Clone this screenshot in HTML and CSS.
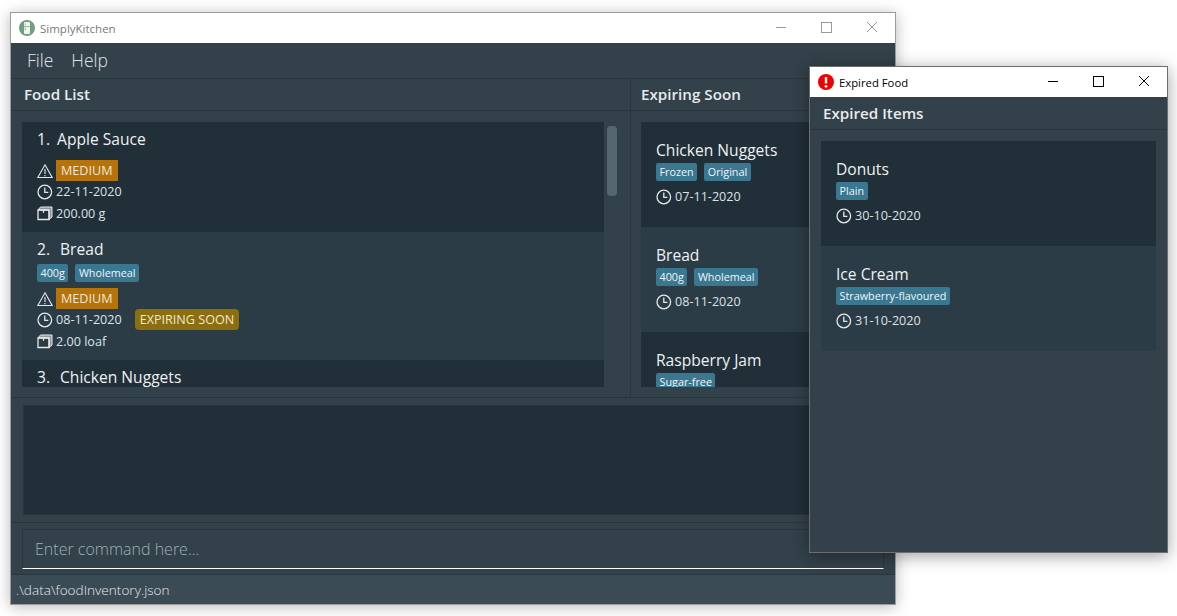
FILE: index.html
```html
<!DOCTYPE html>
<html lang="en">
<head>
    <meta charset="UTF-8">
    <title>SimplyKitchen</title>
    <link rel="stylesheet" href="styles.css">
</head>
<body>
    <svg class="defs" width="0" height="0">
        <symbol id="i-warn" viewBox="0 0 16 16">
            <path d="M8 1.800 15.200 14.500H.8Z" fill="none" stroke="currentColor" stroke-width="1.100"/>
            <path d="M8 6v5M8 12v1.200" stroke="currentColor" stroke-width="1.100"/>
        </symbol>
        <symbol id="i-clock" viewBox="0 0 16 16">
            <circle cx="7.800" cy="8" r="6.800" fill="none" stroke="currentColor" stroke-width="1.300"/>
            <path d="M7.800 3.600V8.400H11.400" fill="none" stroke="currentColor" stroke-width="1.300"/>
        </symbol>
        <symbol id="i-box" viewBox="0 0 16 16">
            <path d="M1 5 3.500 2H15V12L12 14.500V5Z" fill="currentColor" fill-opacity=".55" stroke="currentColor" stroke-width="1"/>
            <path d="M1 5H12V14.500H1Z" fill="none" stroke="currentColor" stroke-width="1.300"/>
            <path d="M6.500 5V7.800" stroke="currentColor" stroke-width="1.300"/>
        </symbol>
    </svg>

    <!-- main window -->
    <div class="window mainWindow">
        <div class="titleBar">
            <svg class="appIcon" viewBox="0 0 16 16" width="16" height="16">
                <circle cx="8" cy="8" r="8" fill="#6f9f80"/>
                <rect x="5" y="2" width="6" height="12" rx="1" fill="#f4f4ee"/>
                <path d="M5 6.500H11M6.300 3.500V5.500M6.300 7.500V10" stroke="#6f9f80" stroke-width=".7"/>
            </svg>
            <span class="titleText">SimplyKitchen</span>
            <div class="winButtons inactive">
                <svg viewBox="0 0 46 30" width="46" height="30"><path d="M19 14.500H29" stroke="currentColor"/></svg>
                <svg viewBox="0 0 46 30" width="46" height="30"><rect x="18.500" y="9.500" width="10" height="10" fill="none" stroke="currentColor"/></svg>
                <svg viewBox="0 0 46 30" width="46" height="30"><path d="M18 9 28 19M28 9 18 19" stroke="currentColor" fill="none"/></svg>
            </div>
        </div>

        <div class="menuBar">
            <span>File</span>
            <span>Help</span>
        </div>

        <div class="panels">
            <div class="panel foodPanel">
                <div class="panelHeader">Food List</div>
                <div class="listWrap">
                    <div class="list">
                        <div class="card dark">
                            <div class="cardTitle"><span class="num first">1.</span>Apple Sauce</div>
                            <div class="tags"></div>
                            <div class="infoRow">
                                <svg class="icon"><use href="#i-warn"/></svg>
                                <span class="priority">MEDIUM</span>
                            </div>
                            <div class="infoRow">
                                <svg class="icon"><use href="#i-clock"/></svg>
                                <span>22-11-2020</span>
                            </div>
                            <div class="infoRow qty">
                                <svg class="icon"><use href="#i-box"/></svg>
                                <span>200.00 g</span>
                            </div>
                        </div>
                        <div class="card light">
                            <div class="cardTitle"><span class="num">2.</span>Bread</div>
                            <div class="tags"><span class="tag">400g</span><span class="tag">Wholemeal</span></div>
                            <div class="infoRow">
                                <svg class="icon"><use href="#i-warn"/></svg>
                                <span class="priority">MEDIUM</span>
                            </div>
                            <div class="infoRow">
                                <svg class="icon"><use href="#i-clock"/></svg>
                                <span>08-11-2020</span>
                                <span class="soon">EXPIRING SOON</span>
                            </div>
                            <div class="infoRow qty">
                                <svg class="icon"><use href="#i-box"/></svg>
                                <span>2.00 loaf</span>
                            </div>
                        </div>
                        <div class="card dark">
                            <div class="cardTitle"><span class="num">3.</span>Chicken Nuggets</div>
                        </div>
                    </div>
                    <div class="scrollTrack"><div class="scrollThumb"></div></div>
                </div>
            </div>

            <div class="panel soonPanel">
                <div class="panelHeader">Expiring Soon</div>
                <div class="listWrap">
                    <div class="list">
                        <div class="card small dark">
                            <div class="cardTitle">Chicken Nuggets</div>
                            <div class="tags"><span class="tag">Frozen</span><span class="tag">Original</span></div>
                            <div class="infoRow">
                                <svg class="icon"><use href="#i-clock"/></svg>
                                <span>07-11-2020</span>
                            </div>
                        </div>
                        <div class="card small light">
                            <div class="cardTitle">Bread</div>
                            <div class="tags"><span class="tag">400g</span><span class="tag">Wholemeal</span></div>
                            <div class="infoRow">
                                <svg class="icon"><use href="#i-clock"/></svg>
                                <span>08-11-2020</span>
                            </div>
                        </div>
                        <div class="card small dark">
                            <div class="cardTitle">Raspberry Jam</div>
                            <div class="tags"><span class="tag">Sugar-free</span></div>
                        </div>
                    </div>
                </div>
            </div>
        </div>

        <div class="resultPane">
            <div class="resultBox"></div>
        </div>

        <div class="commandPane">
            <div class="commandBox">Enter command here...</div>
        </div>

        <div class="statusBar">.\data\foodInventory.json</div>
    </div>

    <!-- expired food popup -->
    <div class="window popupWindow">
        <div class="titleBar popupTitle">
            <svg class="appIcon" viewBox="0 0 16 16" width="16" height="16">
                <circle cx="8" cy="8" r="8" fill="#f00000"/>
                <path d="M8 3V9.500" stroke="#fff" stroke-width="2.400"/>
                <circle cx="8" cy="12.300" r="1.400" fill="#fff"/>
            </svg>
            <span class="titleText">Expired Food</span>
            <div class="winButtons">
                <svg viewBox="0 0 46 30" width="46" height="30"><path d="M19 14.500H29" stroke="currentColor"/></svg>
                <svg viewBox="0 0 46 30" width="46" height="30"><rect x="18.500" y="9.500" width="10" height="10" fill="none" stroke="currentColor"/></svg>
                <svg viewBox="0 0 46 30" width="46" height="30"><path d="M18 9 28 19M28 9 18 19" stroke="currentColor" fill="none"/></svg>
            </div>
        </div>
        <div class="panelHeader popupHeader">Expired Items</div>
        <div class="popupList">
            <div class="card small dark">
                <div class="cardTitle">Donuts</div>
                <div class="tags"><span class="tag">Plain</span></div>
                <div class="infoRow">
                    <svg class="icon"><use href="#i-clock"/></svg>
                    <span>30-10-2020</span>
                </div>
            </div>
            <div class="card small light">
                <div class="cardTitle">Ice Cream</div>
                <div class="tags"><span class="tag">Strawberry-flavoured</span></div>
                <div class="infoRow">
                    <svg class="icon"><use href="#i-clock"/></svg>
                    <span>31-10-2020</span>
                </div>
            </div>
        </div>
    </div>
</body>
</html>
```

FILE: styles.css
```css
/* Page */
html, body {
    margin: 0;
    height: 100%;
    overflow: hidden;
    background-color: #FFFFFF;
    font-family: "Open Sans", "Noto Sans", sans-serif;
    color: #E4E8EA;
}

.defs {
    position: absolute;
}

/* Windows */
.window {
    position: absolute;
    display: flex;
    flex-direction: column;
    box-sizing: border-box;
    background-color: #32414A;
    border: solid 1px #9C9C9C;
    box-shadow: 0 2px 14px rgba(0, 0, 0, 0.28);
}

.mainWindow {
    left: 10px;
    top: 12px;
    width: 886px;
    height: 593px;
}

.popupWindow {
    left: 809px;
    top: 66px;
    width: 359px;
    height: 487px;
    border-color: #6E6E6E;
    box-shadow: 0 3px 16px rgba(0, 0, 0, 0.38);
}

/* Title bar */
.titleBar {
    display: flex;
    align-items: center;
    flex: none;
    height: 30px;
    padding-left: 8px;
    background-color: #FFFFFF;
}

.titleText {
    margin-left: 5px;
    font-size: 11.500px;
    color: #7A7A7A;
}

.popupTitle .titleText {
    font-size: 11.300px;
    color: #000000;
}

.winButtons {
    display: flex;
    margin-left: auto;
    color: #000000;
}

.winButtons.inactive {
    color: #999999;
}

/* Menu */
.menuBar {
    display: flex;
    flex: none;
    align-items: center;
    gap: 18px;
    box-sizing: border-box;
    height: 36px;
    padding: 0 0 1px 16px;
    border-bottom: solid 1px #2A363E;
    font-size: 17.500px;
    font-weight: 300;
    color: #E0E4E6;
}

/* Panels */
.panels {
    display: flex;
    flex: none;
    height: 318px;
    border-bottom: solid 1px #2A363E;
}

.panel {
    display: flex;
    flex-direction: column;
}

.foodPanel {
    flex: none;
    width: 620px;
    box-sizing: border-box;
    border-right: solid 1px #2A363E;
}

.soonPanel {
    flex: 1;
    min-width: 0;
}

.panelHeader {
    flex: none;
    box-sizing: border-box;
    height: 32px;
    padding: 4px 0 0 13px;
    border-bottom: solid 1px #2A363E;
    font-size: 15.200px;
    font-weight: 600;
    line-height: 22px;
    color: #E8EBED;
}

.soonPanel .panelHeader {
    padding-left: 10px;
}

.listWrap {
    display: flex;
    height: 265px;
    margin: 11px 12px 0 11px;
}

.soonPanel .listWrap {
    margin: 11px 0 0 10px;
}

.list {
    flex: 1;
    min-width: 0;
    overflow: hidden;
}

.scrollTrack {
    flex: none;
    width: 14px;
    padding: 4px 0 0 3px;
    box-sizing: border-box;
}

.scrollThumb {
    width: 10px;
    height: 70px;
    border-radius: 4px;
    background-color: #55666F;
}

/* Cards */
.card {
    box-sizing: border-box;
    padding: 8px 15px;
}

.card.dark {
    background-color: #212F38;
}

.card.light {
    background-color: #2C3C46;
}

.card.small {
    height: 105px;
    padding-top: 18px;
}

.cardTitle {
    height: 22px;
    font-size: 15.600px;
    font-weight: 500;
    line-height: 18px;
    color: #EEF1F3;
}

.card.small .cardTitle {
    line-height: 20px;
}

.num {
    margin-right: 10px;
}

.num.first {
    margin-right: 7px;
}

.tags {
    display: flex;
    gap: 7px;
    padding: 2px 0 6px;
}

.card.small .tags {
    padding: 1px 0 5px;
}

.tag {
    height: 18px;
    padding: 0 3.500px;
    border-radius: 2px;
    background-color: #3A7790;
    font-size: 10.800px;
    line-height: 18px;
    color: #F0F6F9;
}

.infoRow {
    display: flex;
    align-items: center;
    height: 21px;
    font-size: 12.600px;
    color: #DDE2E5;
}

.infoRow.qty {
    height: 22px;
}

.icon {
    flex: none;
    width: 16px;
    height: 16px;
    margin-right: 3px;
    color: #E4E8EA;
}

.priority {
    height: 21px;
    padding: 0 5px;
    background-color: #B5730A;
    line-height: 21px;
    color: #F0E6D8;
}

.soon {
    height: 21px;
    margin-left: 13px;
    padding: 0 5px;
    border-radius: 4px;
    background-color: #8B6F0E;
    line-height: 21px;
    color: #F0E6D8;
}

/* Result */
.resultPane {
    flex: none;
    box-sizing: border-box;
    height: 125px;
    padding: 7px 11px 6px 12px;
    border-bottom: solid 1px #2A363E;
}

.resultBox {
    height: 110px;
    box-sizing: border-box;
    border: solid 1px #2A363E;
    background-color: #212F38;
}

/* Command */
.commandPane {
    flex: none;
    box-sizing: border-box;
    height: 52px;
    padding: 6px 11px 5px 11px;
    border-bottom: solid 1px #2A363E;
}

.commandBox {
    box-sizing: border-box;
    height: 40px;
    padding: 0 0 0 12px;
    border: solid 1px #2A363E;
    border-bottom: solid 1px #FFFFFF;
    background-color: #32414A;
    font-size: 16px;
    font-weight: 300;
    line-height: 38px;
    color: #9FB0B8;
}

/* Status */
.statusBar {
    flex: 1;
    padding-left: 5px;
    background-color: #3B4B55;
    font-size: 13.600px;
    font-weight: 300;
    line-height: 29px;
    color: #E4E8EA;
}

/* Popup content */
.popupHeader {
    height: 33px;
    padding: 5px 0 0 13px;
}

.popupList {
    padding: 11px 11px 0;
}
```
